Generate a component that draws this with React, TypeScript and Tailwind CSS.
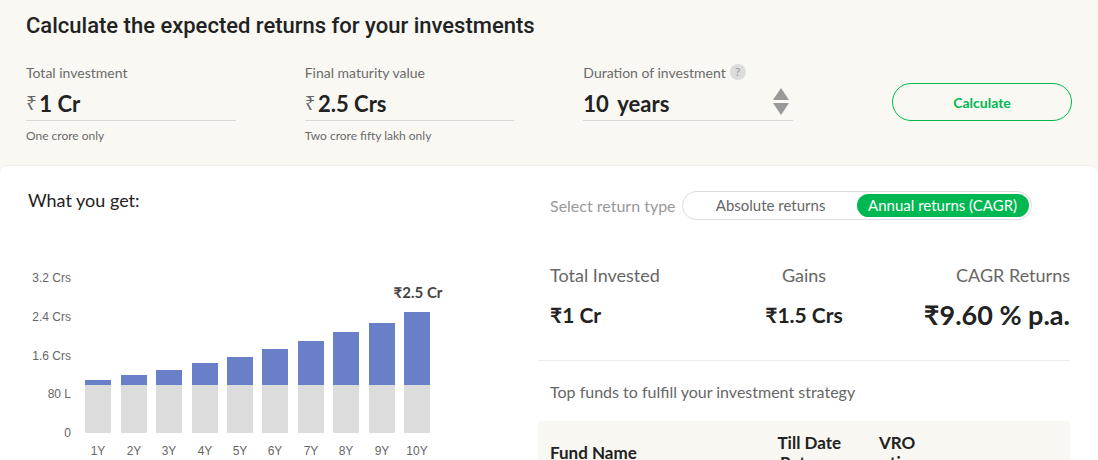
import React, { useState } from 'react';

interface FieldProps {
  id: string;
  label: string;
  value: string;
  hint: string;
}

const bars = [
  { label: '1Y', height: 53 },
  { label: '2Y', height: 58 },
  { label: '3Y', height: 63 },
  { label: '4Y', height: 70 },
  { label: '5Y', height: 76 },
  { label: '6Y', height: 84 },
  { label: '7Y', height: 92 },
  { label: '8Y', height: 101 },
  { label: '9Y', height: 110 },
  { label: '10Y', height: 121 },
];

const ticks = ['3.2 Crs', '2.4 Crs', '1.6 Crs', '80 L', '0'];

const MoneyField: React.FC<FieldProps> = ({ id, label, value, hint }) => {
  return (
    <div className="flex-1 min-w-0">
      <label htmlFor={id} className="block text-[14px] leading-5 text-[#6b6b6b]">
        {label}
      </label>
      <div className="flex items-center h-[38px] border-b border-[#d8d8d8] pt-1">
        <span className="w-3 text-[19px] text-[#666] font-['Noto_Sans',sans-serif]">₹</span>
        <input
          id={id}
          defaultValue={value}
          className="w-full min-w-0 bg-transparent pl-[2px] text-[22px] leading-6 font-bold text-[#222] outline-none"
        />
      </div>
      <p className="mt-[6px] text-[12px] leading-[18px] text-[#6b6b6b]">{hint}</p>
    </div>
  );
};

const DurationField: React.FC = () => {
  const [years, setYears] = useState(10);

  return (
    <div className="flex-1 min-w-0">
      <div className="flex items-center h-5">
        <label htmlFor="duration" className="text-[14px] leading-5 text-[#6b6b6b]">
          Duration of investment
        </label>
        <button
          type="button"
          aria-label="About duration"
          className="ml-1 mb-[2px] w-4 h-4 rounded-full bg-[#dcdcdc] text-[12px] leading-4 text-[#999]"
        >
          ?
        </button>
      </div>
      <div className="flex items-center h-[38px] border-b border-[#d8d8d8] pt-1">
        <input
          id="duration"
          value={years}
          onChange={(e) => setYears(Number(e.target.value) || 0)}
          className="w-[34px] bg-transparent text-[22px] leading-6 font-bold text-[#222] outline-none"
        />
        <span className="text-[22px] leading-6 font-bold text-[#222]">years</span>
        <div className="ml-auto mr-1 mb-1 flex flex-col gap-[3px]">
          <button type="button" aria-label="Increase" onClick={() => setYears(years + 1)}>
            <svg width="16" height="12" viewBox="0 0 16 12" className="block">
              <path d="M8 0L16 12H0Z" fill="#999" />
            </svg>
          </button>
          <button type="button" aria-label="Decrease" onClick={() => setYears(years - 1)}>
            <svg width="16" height="12" viewBox="0 0 16 12" className="block">
              <path d="M8 12L0 0H16Z" fill="#999" />
            </svg>
          </button>
        </div>
      </div>
    </div>
  );
};

const GrowthChart: React.FC = () => {
  return (
    <svg
      width="430"
      height="200"
      viewBox="0 0 430 200"
      role="img"
      aria-label="Growth by year"
      className="block max-w-full"
    >
      {/* Value axis */}
      {ticks.map((tick, i) => (
        <text
          key={tick}
          x="43"
          y={22 + Math.round(i * 38.75)}
          textAnchor="end"
          fontSize="12"
          fill="#666"
          fontFamily="'Liberation Sans', Arial, sans-serif"
        >
          {tick}
        </text>
      ))}
      {/* Bars */}
      {bars.map((bar, i) => {
        const x = 57 + Math.ceil(i * 35.4);
        return (
          <g key={bar.label}>
            <rect x={x} y={173 - bar.height} width="26" height={bar.height - 48} fill="#6980c9" />
            <rect x={x} y="125" width="26" height="48" fill="#dcdcdc" />
            <text
              x={x + 13}
              y="195"
              textAnchor="middle"
              fontSize="12"
              fill="#666"
              fontFamily="'Liberation Sans', Arial, sans-serif"
            >
              {bar.label}
            </text>
          </g>
        );
      })}
      <text x="390" y="38" textAnchor="middle" fontSize="15" fontWeight="700" fill="#444">
        ₹2.5 Cr
      </text>
    </svg>
  );
};

const ReturnSummary: React.FC = () => {
  const [type, setType] = useState('cagr');
  const active = 'rounded-full bg-[#00b852] text-white';
  const idle = 'rounded-full text-[#666]';

  return (
    <section className="flex-1 min-w-0">
      {/* Return type */}
      <div className="flex items-center pl-3">
        <span className="mr-[6px] text-[16px] text-[#999] whitespace-nowrap">Select return type</span>
        <div className="flex h-[29px] w-[350px] rounded-full border border-[#dcdcdc] bg-white p-[2px]">
          <button
            type="button"
            onClick={() => setType('absolute')}
            className={`flex-1 text-[15px] leading-[23px] ${type === 'absolute' ? active : idle}`}
          >
            Absolute returns
          </button>
          <button
            type="button"
            onClick={() => setType('cagr')}
            className={`flex-1 text-[15px] leading-[23px] ${type === 'cagr' ? active : idle}`}
          >
            Annual returns (CAGR)
          </button>
        </div>
      </div>

      {/* Figures */}
      <div className="mt-[43px] grid grid-cols-3 pb-[29px] border-b border-[#ececec]">
        <div className="pl-3">
          <p className="text-[18px] leading-6 text-[#666]">Total Invested</p>
          <p className="mt-3 text-[21px] leading-8 font-bold text-[#222]">₹1 Cr</p>
        </div>
        <div className="text-center">
          <p className="text-[18px] leading-6 text-[#666]">Gains</p>
          <p className="mt-3 text-[21px] leading-8 font-bold text-[#222]">₹1.5 Crs</p>
        </div>
        <div className="text-right">
          <p className="text-[18px] leading-6 text-[#666]">CAGR Returns</p>
          <p className="mt-3 text-[27px] leading-8 font-bold text-[#222]">₹9.60 % p.a.</p>
        </div>
      </div>

      {/* Funds */}
      <h3 className="mt-[19px] pl-3 text-[16px] leading-6 text-[#666]">
        Top funds to fulfill your investment strategy
      </h3>
      <table className="mt-[17px] w-full table-fixed border-separate border-spacing-0 rounded-t bg-[#f8f7f2] text-[17px] leading-5 font-bold text-[#222]">
        <thead>
          <tr>
            <th className="w-[43%] py-3 pl-3 text-left">Fund Name</th>
            <th className="w-[16%] py-3">Till Date Returns</th>
            <th className="w-[17%] py-3">VRO<br />rating</th>
            <th />
          </tr>
        </thead>
      </table>
    </section>
  );
};

const App: React.FC = () => {
  return (
    <main className="h-screen overflow-hidden bg-[#f9f8f3] font-[Lato,sans-serif]">
      {/* Inputs */}
      <form className="px-[26px] pt-[11px] pb-5" onSubmit={(e) => e.preventDefault()}>
        <h1 className="text-[22px] leading-[30px] font-medium text-[#222] font-[Roboto,sans-serif]">
          Calculate the expected returns for your investments
        </h1>
        <div className="mt-[22px] flex gap-[69px]">
          <MoneyField id="invested" label="Total investment" value="1 Cr" hint="One crore only" />
          <MoneyField
            id="maturity"
            label="Final maturity value"
            value="2.5 Crs"
            hint="Two crore fifty lakh only"
          />
          <DurationField />
          <button
            type="submit"
            className="ml-[30px] mt-5 h-[38px] w-[180px] shrink-0 rounded-full border border-[#00b852] text-[14px] font-bold text-[#00b852]"
          >
            Calculate
          </button>
        </div>
      </form>

      {/* Results */}
      <div className="flex rounded-t-lg border-t border-[#ececec] bg-white pt-[25px] pr-7">
        <section className="w-[calc(50%+3px)] shrink-0 pl-7">
          <h2 className="text-[18px] leading-[18px] text-[#222]">What you get:</h2>
          <div className="mt-[51px]">
            <GrowthChart />
          </div>
        </section>
        <ReturnSummary />
      </div>
    </main>
  );
};

export default App;
